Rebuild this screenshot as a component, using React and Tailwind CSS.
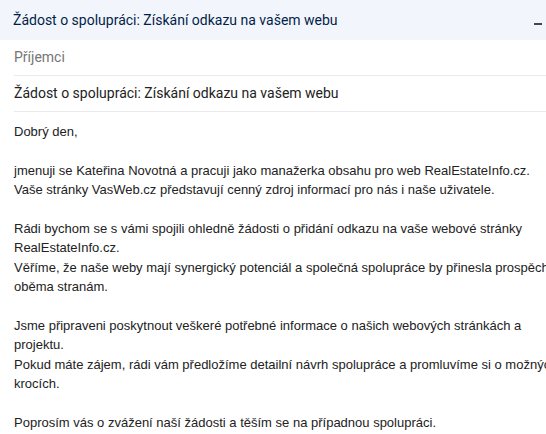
import React from 'react';

const subject = 'Žádost o spolupráci: Získání odkazu na vašem webu';

const bodyLines = [
  'Dobrý den,',
  '',
  'jmenuji se Kateřina Novotná a pracuji jako manažerka obsahu pro web RealEstateInfo.cz.',
  'Vaše stránky VasWeb.cz představují cenný zdroj informací pro nás i naše uživatele.',
  '',
  'Rádi bychom se s vámi spojili ohledně žádosti o přidání odkazu na vaše webové stránky',
  'RealEstateInfo.cz.',
  'Věříme, že naše weby mají synergický potenciál a společná spolupráce by přinesla prospěch',
  'oběma stranám.',
  '',
  'Jsme připraveni poskytnout veškeré potřebné informace o našich webových stránkách a',
  'projektu.',
  'Pokud máte zájem, rádi vám předložíme detailní návrh spolupráce a promluvíme si o možných',
  'krocích.',
  '',
  'Poprosím vás o zvážení naší žádosti a těším se na případnou spolupráci.',
];

const App = () => {
  return (
    <div className="w-[546px] h-[434px] overflow-hidden bg-white">
      {/* Compose header */}
      <div className="h-[40px] bg-[#f2f6fc] flex items-center justify-between pl-[13px] pr-[4px]">
        <span className="text-[14px] text-[#041e49] font-['Roboto',sans-serif]">{subject}</span>
        <span className="w-[8px] h-[2px] bg-[#444746] mt-[8px]" />
      </div>

      {/* Fields */}
      <div className="pl-[14px] font-['Roboto',sans-serif] text-[14px]">
        <div className="h-[36px] flex items-center border-b border-[#e8eaed] text-[#757575]">
          Příjemci
        </div>
        <div className="h-[36px] flex items-center border-b border-[#e8eaed] text-[#222]">
          {subject}
        </div>
      </div>

      {/* Body */}
      <div className="pl-[14px] pt-[10px] font-['Liberation_Sans',Arial,sans-serif] text-[13px] leading-[19.4px] text-[#222]">
        {bodyLines.map((line, i) => (
          <div key={i} className="whitespace-nowrap h-[19.4px]">
            {line}
          </div>
        ))}
      </div>
    </div>
  );
};

export default App;
